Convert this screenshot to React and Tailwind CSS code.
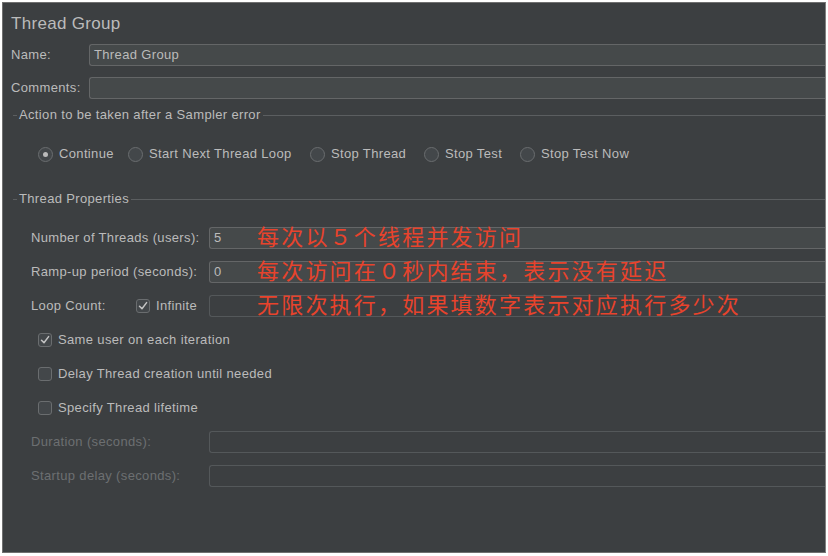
import React from "react";

const font = { fontFamily: '"Liberation Sans", Arial, sans-serif' };
const cjk = { fontFamily: '"Liberation Sans", "Noto Sans CJK SC", sans-serif' };

function Radio({ checked, label, w }) {
  return (
    <div className={`flex items-center gap-[6px] ${w}`}>
      <span className="w-[15px] h-[15px] rounded-full border border-[#6a6d6f] bg-[#43474a] flex items-center justify-center">
        {checked && <span className="w-[5px] h-[5px] rounded-full bg-[#bbbbbb]" />}
      </span>
      <span>{label}</span>
    </div>
  );
}

function Check({ checked }) {
  return (
    <span className="w-[14px] h-[14px] rounded-[3px] border border-[#6a6d6f] bg-[#43474a] flex items-center justify-center">
      {checked && (
        <svg width="10" height="10" viewBox="0 0 10 10">
          <polyline points="1.5,5.2 4,7.8 8.6,1.6" fill="none" stroke="#c4c4c4" strokeWidth="1.5" strokeLinecap="round" strokeLinejoin="round" />
        </svg>
      )}
    </span>
  );
}

function Field({ label, value, disabled, note }) {
  return (
    <div className="relative flex items-center h-[22px] pl-[28px]">
      <span className={`w-[178px] ${disabled ? "text-[#6c6f71]" : ""}`}>{label}</span>
      <div
        className={`flex-1 h-[22px] flex items-center pl-[4px] rounded-l-[3px] border border-r-0 ${
          disabled ? "bg-[#3c3f41] border-[#54585a]" : "bg-[#45494a] border-[#646667]"
        }`}
      >
        {value}
      </div>
      {note && (
        <span className="absolute left-[254px] top-1/2 -translate-y-1/2 text-[22px] tracking-[2.2px] text-[#e8432c] leading-none" style={cjk}>
          {note}
        </span>
      )}
    </div>
  );
}

function Legend({ text }) {
  return (
    <div className="flex items-center h-[16px] pl-[10px]">
      <span className="w-[4px] h-px bg-[#5b5e60]" />
      <span className="px-[2px]">{text}</span>
      <span className="flex-1 h-px bg-[#5b5e60]" />
    </div>
  );
}

export default function App() {
  return (
    <div className="w-[828px] h-[556px] bg-white pt-[2px] pl-[2px]">
      <div
        className="w-[824px] h-[551px] border border-[#707070] border-r-[#808080] bg-[#3c3f41] text-[#bbbbbb] text-[13px] tracking-[0.35px] flex flex-col"
        style={font}
      >
        <div className="h-[41px] flex items-center pl-[8px] text-[17px] tracking-[0.3px]">Thread Group</div>

        <div className="flex items-center h-[22px] pl-[8px]">
          <span className="w-[78px]">Name:</span>
          <div className="flex-1 h-[22px] flex items-center pl-[4px] rounded-l-[3px] border border-r-0 border-[#646667] bg-[#45494a]">
            Thread Group
          </div>
        </div>

        <div className="flex items-center h-[22px] pl-[8px] mt-[11px]">
          <span className="w-[78px]">Comments:</span>
          <div className="flex-1 h-[22px] rounded-l-[3px] border border-r-0 border-[#646667] bg-[#45494a]" />
        </div>

        <div className="mt-[8px]">
          <Legend text="Action to be taken after a Sampler error" />
        </div>

        <div className="mt-[23px] h-[16px] pl-[35px] flex items-center">
          <Radio checked label="Continue" w="w-[90px]" />
          <Radio label="Start Next Thread Loop" w="w-[182px]" />
          <Radio label="Stop Thread" w="w-[114px]" />
          <Radio label="Stop Test" w="w-[96px]" />
          <Radio label="Stop Test Now" w="" />
        </div>

        <div className="mt-[29px]">
          <Legend text="Thread Properties" />
        </div>

        <div className="mt-[20px]">
          <Field label="Number of Threads (users):" value="5" note="每次以５个线程并发访问" />
        </div>
        <div className="mt-[12px]">
          <Field label="Ramp-up period (seconds):" value="0" note="每次访问在０秒内结束，表示没有延迟" />
        </div>

        <div className="relative mt-[12px] flex items-center h-[22px] pl-[28px]">
          <span className="w-[105px]">Loop Count:</span>
          <div className="w-[73px] flex items-center gap-[6px]">
            <Check checked />
            <span>Infinite</span>
          </div>
          <div className="flex-1 h-[22px] rounded-l-[3px] border border-r-0 border-[#54585a] bg-[#3c3f41]" />
          <span className="absolute left-[254px] top-1/2 -translate-y-1/2 text-[22px] tracking-[2.2px] text-[#e8432c] leading-none" style={cjk}>
            无限次执行，如果填数字表示对应执行多少次
          </span>
        </div>

        <div className="mt-[15px] h-[16px] pl-[35px] flex items-center gap-[6px]">
          <Check checked />
          <span>Same user on each iteration</span>
        </div>
        <div className="mt-[18px] h-[16px] pl-[35px] flex items-center gap-[6px]">
          <Check />
          <span>Delay Thread creation until needed</span>
        </div>
        <div className="mt-[18px] h-[16px] pl-[35px] flex items-center gap-[6px]">
          <Check />
          <span>Specify Thread lifetime</span>
        </div>

        <div className="mt-[15px]">
          <Field label="Duration (seconds):" disabled />
        </div>
        <div className="mt-[12px]">
          <Field label="Startup delay (seconds):" disabled />
        </div>
      </div>
    </div>
  );
}
